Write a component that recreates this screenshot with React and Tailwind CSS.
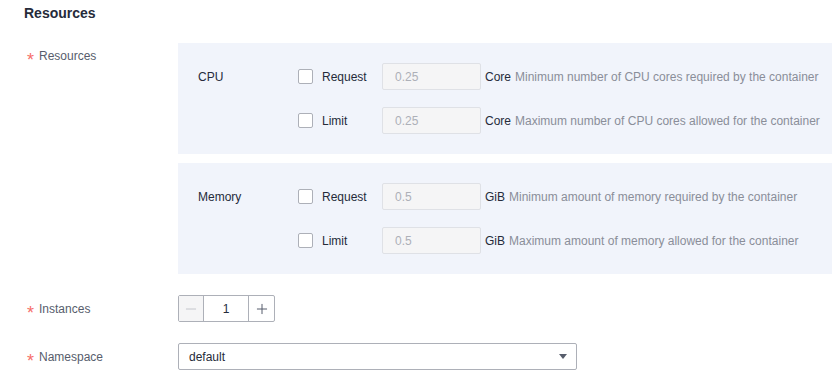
import { Minus, Plus } from "lucide-react";

function Checkbox() {
  return <span className="w-[15px] h-[15px] border border-[#adb0b8] rounded-[2px] bg-white shrink-0" />;
}

function ResourceRow({ label, value, unit, hint }) {
  return (
    <div className="flex items-center h-[27px]">
      <Checkbox />
      <span className="ml-[9px] w-[60px] text-[#252b3a]">{label}</span>
      <div className="w-[99px] h-[27px] border border-[#dfe1e6] rounded-[2px] bg-[#f5f5f6] pl-[12px] flex items-center text-[#adb0b8]">
        {value}
      </div>
      <span className="ml-[4px] text-[#252b3a]">{unit}</span>
      <span className="ml-[4px] text-[#8a8e99] whitespace-nowrap">{hint}</span>
    </div>
  );
}

function ResourcePanel({ title, unit, value, rows }) {
  return (
    <div className="bg-[#f1f4fb] pl-[20px] py-[20px] flex">
      <div className="w-[100px] h-[27px] flex items-center text-[#252b3a]">{title}</div>
      <div className="flex flex-col gap-[17px]">
        {rows.map((r) => (
          <ResourceRow key={r.label} label={r.label} value={value} unit={unit} hint={r.hint} />
        ))}
      </div>
    </div>
  );
}

function Label({ children }) {
  return (
    <div className="w-[154px] pl-[3px] text-[#575d6c] flex items-center">
      <span className="text-[#f66f6a] mr-[5px] text-[18px] leading-none translate-y-[4px]">*</span>
      {children}
    </div>
  );
}

export default function App() {
  return (
    <div className="w-[832px] h-[377px] overflow-hidden bg-white pl-[24px] pt-[3px] text-[12px] font-['Liberation_Sans',Arial,sans-serif]">
      <h2 className="text-[14px] leading-[20px] font-bold text-[#252b3a]">Resources</h2>

      <div className="flex mt-[20px]">
        <div className="pt-[4px] h-fit">
          <Label>Resources</Label>
        </div>
        <div className="flex-1 flex flex-col gap-[9px]">
          <ResourcePanel
            title="CPU"
            unit="Core"
            value="0.25"
            rows={[
              { label: "Request", hint: "Minimum number of CPU cores required by the container" },
              { label: "Limit", hint: "Maximum number of CPU cores allowed for the container" },
            ]}
          />
          <ResourcePanel
            title="Memory"
            unit="GiB"
            value="0.5"
            rows={[
              { label: "Request", hint: "Minimum amount of memory required by the container" },
              { label: "Limit", hint: "Maximum amount of memory allowed for the container" },
            ]}
          />
        </div>
      </div>

      <div className="flex mt-[21px] h-[27px]">
        <Label>Instances</Label>
        <div className="flex h-[27px] border border-[#adb0b8] rounded-[2px]">
          <div className="w-[25px] bg-[#f5f5f6] flex items-center justify-center border-r border-[#adb0b8]">
            <Minus className="w-[16px] h-[16px] text-[#c4c6cc]" strokeWidth={1.5} />
          </div>
          <div className="w-[44px] flex items-center justify-center text-[#252b3a]">1</div>
          <div className="w-[26px] flex items-center justify-center border-l border-[#adb0b8]">
            <Plus className="w-[16px] h-[16px] text-[#575d6c]" strokeWidth={1.5} />
          </div>
        </div>
      </div>

      <div className="flex mt-[21px] h-[27px]">
        <Label>Namespace</Label>
        <div className="w-[399px] h-[27px] border border-[#adb0b8] rounded-[2px] pl-[10px] pr-[9px] flex items-center justify-between text-[#252b3a]">
          <span>default</span>
          <svg width="8" height="5" viewBox="0 0 8 5">
            <path d="M0 0h8L4 5z" fill="#575d6c" />
          </svg>
        </div>
      </div>
    </div>
  );
}
